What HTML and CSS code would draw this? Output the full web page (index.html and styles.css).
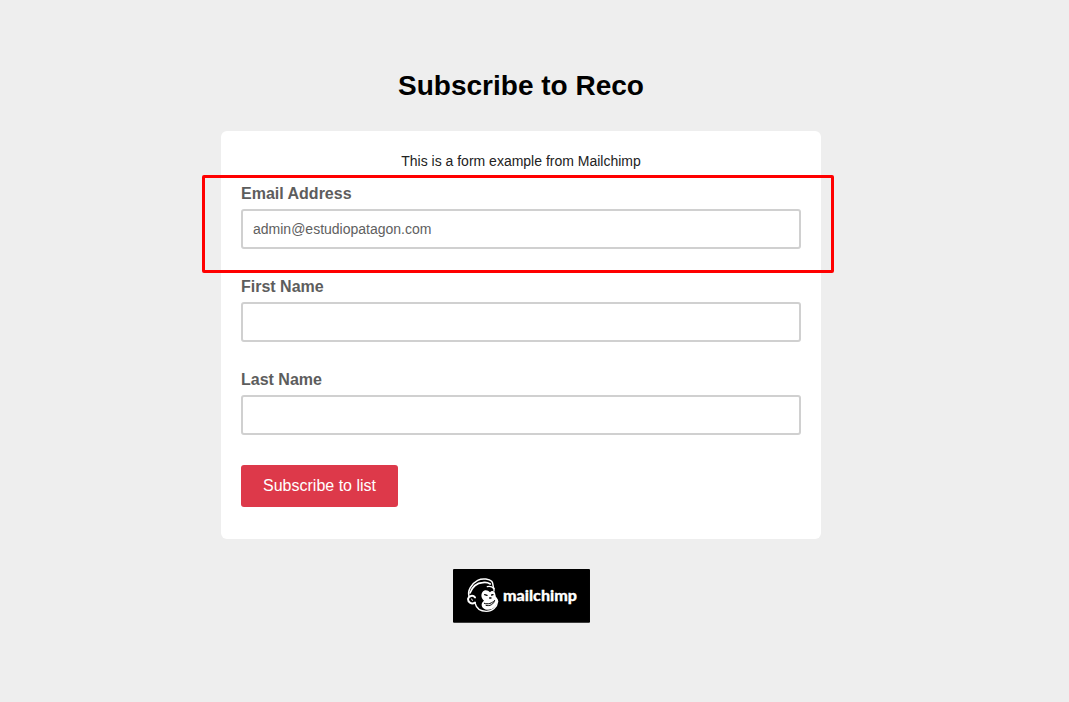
FILE: index.html
```html
<!DOCTYPE html>
<html lang="en">
<head>
<meta charset="utf-8">
<title>Subscribe to Reco</title>
<link rel="stylesheet" href="styles.css">
</head>
<body>
<main class="page">
  <h1 class="title">Subscribe to Reco</h1>
  <form class="card">
    <p class="intro">This is a form example from Mailchimp</p>
    <div class="field field-marked">
      <label class="label" for="email">Email Address</label>
      <input class="input" id="email" type="text" value="admin@estudiopatagon.com">
      <span class="marker"></span>
    </div>
    <div class="field">
      <label class="label" for="first">First Name</label>
      <input class="input" id="first" type="text">
    </div>
    <div class="field">
      <label class="label" for="last">Last Name</label>
      <input class="input" id="last" type="text">
    </div>
    <button class="submit" type="button">Subscribe to list</button>
  </form>
  <svg class="badge" viewBox="9 12 411 160" role="img" aria-label="mailchimp">
    <rect x="9" y="12" width="411" height="161" rx="3" fill="#000"/>
    <g fill="none" stroke="#fff" stroke-linecap="round" stroke-linejoin="round">
      <path d="M57 93C52 78 64 56 83 46C99 38 119 43 125 49C131 56 127 62 132 71" stroke-width="4.5"/>
      <path d="M60 84C67 66 80 54 98 53C108 51 116 54 121 57" stroke-width="5"/>
      <path d="M112 65C120 63 127 66 132 71L132 78" stroke-width="4"/>
      <path d="M75 97C69 89 56 92 54 102C54 113 65 119 75 113" stroke-width="6"/>
      <path d="M65 102L67 106" stroke-width="3"/>
      <path d="M75 114C79 130 92 139 109 139C128 139 141 127 143 109C143 104 140 101 137 98" stroke-width="4"/>
    </g>
    <path d="M97 82C103 73 114 75 120 82C125 75 133 77 135 84L138 97C145 103 144 115 136 124C126 136 109 138 99 129C92 121 95 112 102 107C94 101 92 90 97 82Z" fill="#fff"/>
    <g fill="none" stroke="#000" stroke-linecap="round">
      <path d="M104 89L111 91M125 90L129 89M119 99L123 99" stroke-width="4"/>
      <path d="M103 115C114 119 126 115 134 106C132 117 119 125 108 121" stroke-width="3"/>
    </g>
    <text class="wordmark" x="159" y="108" textLength="222" lengthAdjust="spacingAndGlyphs">mailchimp</text>
  </svg>
</main>
</body>
</html>
```
FILE: styles.css
```css
* { box-sizing: border-box; }
body {
  margin: 0;
  min-height: 702px;
  background: #eee;
  font-family: "Liberation Sans", Arial, sans-serif;
}
.page {
  display: flex;
  flex-direction: column;
  align-items: center;
  width: 1042px;
  padding-top: 66px;
}
.title {
  margin: 0 0 25px;
  font-size: 28px;
  line-height: 40px;
  color: #000;
}
.card {
  width: 600px;
  height: 408px;
  padding: 20px;
  border-radius: 6px;
  background: #fff;
}
.intro {
  margin: 0 0 4px;
  font-size: 14px;
  line-height: 20px;
  text-align: center;
  color: #222;
}
.field {
  display: flex;
  flex-direction: column;
  height: 93px;
  padding-top: 7px;
}
.field-marked { position: relative; }
.label {
  margin-bottom: 3px;
  font-size: 16px;
  font-weight: 700;
  line-height: 24px;
  color: #5d5d5d;
}
.input {
  width: 100%;
  height: 40px;
  padding: 0 10px;
  border: 2px solid #d0d0d0;
  border-radius: 3px;
  background: #fff;
  font: 14px "Liberation Sans", Arial, sans-serif;
  color: #606060;
}
.marker {
  position: absolute;
  top: 0;
  left: -39px;
  width: 632px;
  height: 98px;
  border: 3px solid #f00;
  border-radius: 2px;
}
.submit {
  display: block;
  width: 157px;
  height: 42px;
  margin-top: 11px;
  padding: 0;
  border: 0;
  border-radius: 3px;
  background: #dd394a;
  font: 16px "Liberation Sans", Arial, sans-serif;
  color: #fff;
}
.badge {
  display: block;
  width: 137px;
  height: 53.33px;
  margin-top: 30px;
  overflow: visible;
}
.wordmark {
  fill: #fff;
  stroke: #fff;
  stroke-width: 0.8px;
  font: 900 45px Lato, "Open Sans", sans-serif;
}
```
